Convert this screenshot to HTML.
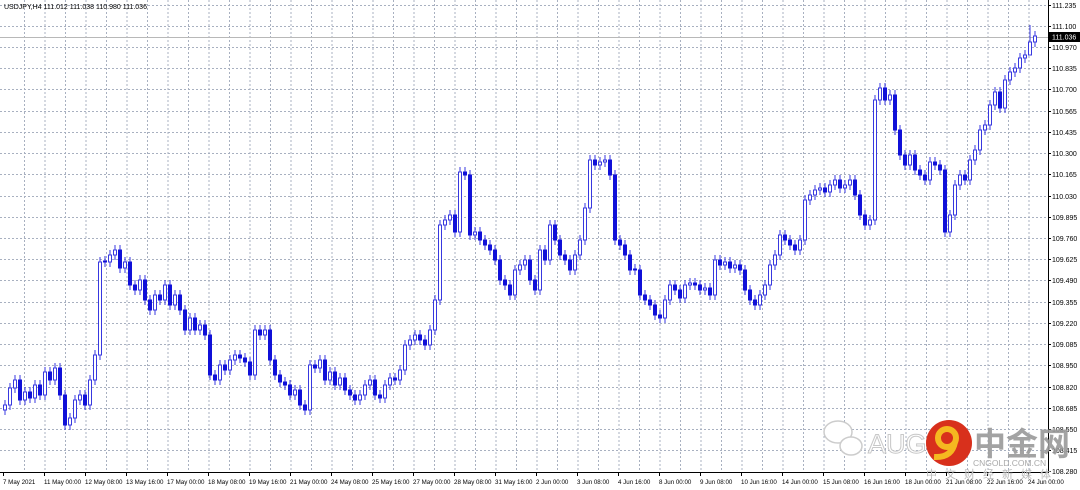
<!DOCTYPE html>
<html><head><meta charset="utf-8"><style>
html,body{margin:0;padding:0;background:#fff;width:1080px;height:490px;overflow:hidden}
svg{display:block;font-family:"Liberation Sans","Noto Sans CJK SC",sans-serif}
.u{fill:#fff;stroke:#3838e0;stroke-width:1}
.d{fill:#1010d8;stroke:#1010d8;stroke-width:1}
.t{font-size:7px;fill:#000}
.t2{font-size:6.2px;fill:#000}
</style></head><body>
<svg width="1080" height="490" xmlns="http://www.w3.org/2000/svg">
<g stroke="#a8b0c0" stroke-width="1" stroke-dasharray="2,2" fill="none">
<path d="M24.5 0V472M45 0V472M65.5 0V472M86 0V472M106.5 0V472M127 0V472M147.5 0V472M168 0V472M188.5 0V472M209 0V472M229.5 0V472M250 0V472M270.5 0V472M291 0V472M311.5 0V472M332 0V472M352.5 0V472M373 0V472M393.5 0V472M414 0V472M434.5 0V472M455 0V472M475.5 0V472M496 0V472M516.5 0V472M537 0V472M557.5 0V472M578 0V472M598.5 0V472M619 0V472M639.5 0V472M660 0V472M680.5 0V472M701 0V472M721.5 0V472M742 0V472M762.5 0V472M783 0V472M803.5 0V472M824 0V472M844.5 0V472M865 0V472M885.5 0V472M906 0V472M926.5 0V472M947 0V472M967.5 0V472M988 0V472M1008.5 0V472M1029 0V472"/>
<path d="M0 5.5H1048M0 26.5H1048M0 47.5H1048M0 68.5H1048M0 89.5H1048M0 111.5H1048M0 132.5H1048M0 153.5H1048M0 174.5H1048M0 196.5H1048M0 217.5H1048M0 238.5H1048M0 259.5H1048M0 280.5H1048M0 302.5H1048M0 323.5H1048M0 344.5H1048M0 365.5H1048M0 387.5H1048M0 408.5H1048M0 429.5H1048M0 450.5H1048"/>
</g>
<line x1="0" y1="37.5" x2="1048" y2="37.5" stroke="#b8b8b8"/>
<path stroke="#3838e0" stroke-width="1" fill="none" d="M5 400v15M10 383v27M15 375v18M20 375v30M25 387v18M30 387v16M35 380v23M40 380v20M45 367v33M50 367v18M55 363v22M60 363v37M65 390v40M70 413v17M75 395v28M80 390v15M85 390v20M90 375v35M95 350v35M100 257v103M105 256v11M110 250v17M115 245v15M120 245v28M125 257v16M130 257v33M135 280v15M140 275v20M145 275v30M150 295v20M155 290v25M160 290v15M165 280v25M170 280v30M175 290v20M180 290v25M185 305v30M190 313v22M195 313v22M200 320v15M205 320v20M210 330v50M215 370v15M220 360v25M225 360v15M230 355v20M235 350v15M240 350v13M245 353v14M250 357v23M255 325v55M260 325v15M265 325v15M270 325v40M275 355v25M280 370v17M285 377v13M290 380v20M295 385v15M300 385v25M305 400v15M310 360v55M315 360v13M320 355v18M325 355v30M330 367v18M335 367v23M340 373v17M345 373v22M350 385v15M355 390v15M360 390v15M365 380v20M370 375v15M375 375v25M380 390v13M385 380v23M390 373v17M395 373v12M400 365v20M405 340v35M410 335v15M415 330v15M420 330v15M425 335v15M430 325v25M435 295v40M440 220v85M445 215v15M450 210v15M455 210v27M460 167v70M465 167v13M470 170v70M475 227v13M480 227v18M485 235v15M490 240v15M495 245v20M500 255v30M505 275v15M510 280v20M515 265v35M520 260v15M525 255v15M530 255v30M535 275v20M540 245v50M545 245v20M550 220v45M555 220v25M560 235v25M565 250v15M570 255v20M575 250v25M580 235v25M585 203v42M590 155v58M595 155v15M600 157v13M605 155v12M610 155v25M615 170v75M620 235v15M625 240v20M630 250v25M635 264v11M640 265v35M645 290v15M650 295v15M655 300v20M660 310v13M665 295v28M670 280v25M675 280v15M680 285v18M685 280v23M690 278v12M695 278v12M700 280v15M705 283v12M710 283v17M715 255v45M720 255v15M725 257v13M730 257v16M735 260v13M740 260v15M745 265v30M750 285v20M755 295v15M760 290v20M765 280v20M770 260v30M775 250v20M780 230v30M785 230v15M790 235v15M795 240v15M800 235v20M805 195v50M810 190v15M815 185v15M820 183v12M825 183v14M830 180v17M835 175v15M840 175v18M845 180v13M850 175v15M855 175v25M860 190v30M865 210v20M870 215v15M875 95v130M880 83v22M885 83v22M890 90v15M895 90v45M900 125v35M905 150v20M910 150v20M915 150v25M920 165v15M925 170v15M930 157v28M935 157v13M940 160v15M945 165v72M950 210v27M955 180v40M960 170v20M965 170v15M970 155v30M975 145v20M980 125v30M985 120v15M990 100v30M995 87v23M1000 87v26M1005 75v38M1010 67v18M1015 63v14M1020 53v20M1025 50v13M1030 25v30M1035 31v16"/>
<g>
<rect class="u" x="3.5" y="405" width="3" height="5"/><rect class="u" x="8.5" y="388" width="3" height="17"/><rect class="u" x="13.5" y="380" width="3" height="8"/><rect class="d" x="18.5" y="380" width="3" height="20"/><rect class="u" x="23.5" y="392" width="3" height="8"/><rect class="d" x="28.5" y="392" width="3" height="6"/><rect class="u" x="33.5" y="385" width="3" height="13"/><rect class="d" x="38.5" y="385" width="3" height="10"/><rect class="u" x="43.5" y="372" width="3" height="23"/><rect class="d" x="48.5" y="372" width="3" height="8"/><rect class="u" x="53.5" y="368" width="3" height="12"/><rect class="d" x="58.5" y="368" width="3" height="27"/><rect class="d" x="63.5" y="395" width="3" height="30"/><rect class="u" x="68.5" y="418" width="3" height="7"/><rect class="u" x="73.5" y="400" width="3" height="18"/><rect class="u" x="78.5" y="395" width="3" height="5"/><rect class="d" x="83.5" y="395" width="3" height="10"/><rect class="u" x="88.5" y="380" width="3" height="25"/><rect class="u" x="93.5" y="355" width="3" height="25"/><rect class="u" x="98.5" y="262" width="3" height="93"/><rect class="d" x="103.5" y="261" width="3" height="1"/><rect class="u" x="108.5" y="255" width="3" height="7"/><rect class="u" x="113.5" y="250" width="3" height="5"/><rect class="d" x="118.5" y="250" width="3" height="18"/><rect class="u" x="123.5" y="262" width="3" height="6"/><rect class="d" x="128.5" y="262" width="3" height="23"/><rect class="d" x="133.5" y="285" width="3" height="5"/><rect class="u" x="138.5" y="280" width="3" height="10"/><rect class="d" x="143.5" y="280" width="3" height="20"/><rect class="d" x="148.5" y="300" width="3" height="10"/><rect class="u" x="153.5" y="295" width="3" height="15"/><rect class="d" x="158.5" y="295" width="3" height="5"/><rect class="u" x="163.5" y="285" width="3" height="15"/><rect class="d" x="168.5" y="285" width="3" height="20"/><rect class="u" x="173.5" y="295" width="3" height="10"/><rect class="d" x="178.5" y="295" width="3" height="15"/><rect class="d" x="183.5" y="310" width="3" height="20"/><rect class="u" x="188.5" y="318" width="3" height="12"/><rect class="d" x="193.5" y="318" width="3" height="12"/><rect class="u" x="198.5" y="325" width="3" height="5"/><rect class="d" x="203.5" y="325" width="3" height="10"/><rect class="d" x="208.5" y="335" width="3" height="40"/><rect class="d" x="213.5" y="375" width="3" height="5"/><rect class="u" x="218.5" y="365" width="3" height="15"/><rect class="d" x="223.5" y="365" width="3" height="5"/><rect class="u" x="228.5" y="360" width="3" height="10"/><rect class="u" x="233.5" y="355" width="3" height="5"/><rect class="d" x="238.5" y="355" width="3" height="3"/><rect class="d" x="243.5" y="358" width="3" height="4"/><rect class="d" x="248.5" y="362" width="3" height="13"/><rect class="u" x="253.5" y="330" width="3" height="45"/><rect class="d" x="258.5" y="330" width="3" height="5"/><rect class="u" x="263.5" y="330" width="3" height="5"/><rect class="d" x="268.5" y="330" width="3" height="30"/><rect class="d" x="273.5" y="360" width="3" height="15"/><rect class="d" x="278.5" y="375" width="3" height="7"/><rect class="d" x="283.5" y="382" width="3" height="3"/><rect class="d" x="288.5" y="385" width="3" height="10"/><rect class="u" x="293.5" y="390" width="3" height="5"/><rect class="d" x="298.5" y="390" width="3" height="15"/><rect class="d" x="303.5" y="405" width="3" height="5"/><rect class="u" x="308.5" y="365" width="3" height="45"/><rect class="d" x="313.5" y="365" width="3" height="3"/><rect class="u" x="318.5" y="360" width="3" height="8"/><rect class="d" x="323.5" y="360" width="3" height="20"/><rect class="u" x="328.5" y="372" width="3" height="8"/><rect class="d" x="333.5" y="372" width="3" height="13"/><rect class="u" x="338.5" y="378" width="3" height="7"/><rect class="d" x="343.5" y="378" width="3" height="12"/><rect class="d" x="348.5" y="390" width="3" height="5"/><rect class="d" x="353.5" y="395" width="3" height="5"/><rect class="u" x="358.5" y="395" width="3" height="5"/><rect class="u" x="363.5" y="385" width="3" height="10"/><rect class="u" x="368.5" y="380" width="3" height="5"/><rect class="d" x="373.5" y="380" width="3" height="15"/><rect class="d" x="378.5" y="395" width="3" height="3"/><rect class="u" x="383.5" y="385" width="3" height="13"/><rect class="u" x="388.5" y="378" width="3" height="7"/><rect class="d" x="393.5" y="378" width="3" height="2"/><rect class="u" x="398.5" y="370" width="3" height="10"/><rect class="u" x="403.5" y="345" width="3" height="25"/><rect class="u" x="408.5" y="340" width="3" height="5"/><rect class="u" x="413.5" y="335" width="3" height="5"/><rect class="d" x="418.5" y="335" width="3" height="5"/><rect class="d" x="423.5" y="340" width="3" height="5"/><rect class="u" x="428.5" y="330" width="3" height="15"/><rect class="u" x="433.5" y="300" width="3" height="30"/><rect class="u" x="438.5" y="225" width="3" height="75"/><rect class="u" x="443.5" y="220" width="3" height="5"/><rect class="u" x="448.5" y="215" width="3" height="5"/><rect class="d" x="453.5" y="215" width="3" height="17"/><rect class="u" x="458.5" y="172" width="3" height="60"/><rect class="d" x="463.5" y="172" width="3" height="3"/><rect class="d" x="468.5" y="175" width="3" height="60"/><rect class="u" x="473.5" y="232" width="3" height="3"/><rect class="d" x="478.5" y="232" width="3" height="8"/><rect class="d" x="483.5" y="240" width="3" height="5"/><rect class="d" x="488.5" y="245" width="3" height="5"/><rect class="d" x="493.5" y="250" width="3" height="10"/><rect class="d" x="498.5" y="260" width="3" height="20"/><rect class="d" x="503.5" y="280" width="3" height="5"/><rect class="d" x="508.5" y="285" width="3" height="10"/><rect class="u" x="513.5" y="270" width="3" height="25"/><rect class="u" x="518.5" y="265" width="3" height="5"/><rect class="u" x="523.5" y="260" width="3" height="5"/><rect class="d" x="528.5" y="260" width="3" height="20"/><rect class="d" x="533.5" y="280" width="3" height="10"/><rect class="u" x="538.5" y="250" width="3" height="40"/><rect class="d" x="543.5" y="250" width="3" height="10"/><rect class="u" x="548.5" y="225" width="3" height="35"/><rect class="d" x="553.5" y="225" width="3" height="15"/><rect class="d" x="558.5" y="240" width="3" height="15"/><rect class="d" x="563.5" y="255" width="3" height="5"/><rect class="d" x="568.5" y="260" width="3" height="10"/><rect class="u" x="573.5" y="255" width="3" height="15"/><rect class="u" x="578.5" y="240" width="3" height="15"/><rect class="u" x="583.5" y="208" width="3" height="32"/><rect class="u" x="588.5" y="160" width="3" height="48"/><rect class="d" x="593.5" y="160" width="3" height="5"/><rect class="u" x="598.5" y="162" width="3" height="3"/><rect class="u" x="603.5" y="160" width="3" height="2"/><rect class="d" x="608.5" y="160" width="3" height="15"/><rect class="d" x="613.5" y="175" width="3" height="65"/><rect class="d" x="618.5" y="240" width="3" height="5"/><rect class="d" x="623.5" y="245" width="3" height="10"/><rect class="d" x="628.5" y="255" width="3" height="15"/><rect class="d" x="633.5" y="269" width="3" height="1"/><rect class="d" x="638.5" y="270" width="3" height="25"/><rect class="d" x="643.5" y="295" width="3" height="5"/><rect class="d" x="648.5" y="300" width="3" height="5"/><rect class="d" x="653.5" y="305" width="3" height="10"/><rect class="d" x="658.5" y="315" width="3" height="3"/><rect class="u" x="663.5" y="300" width="3" height="18"/><rect class="u" x="668.5" y="285" width="3" height="15"/><rect class="d" x="673.5" y="285" width="3" height="5"/><rect class="d" x="678.5" y="290" width="3" height="8"/><rect class="u" x="683.5" y="285" width="3" height="13"/><rect class="u" x="688.5" y="283" width="3" height="2"/><rect class="d" x="693.5" y="283" width="3" height="2"/><rect class="d" x="698.5" y="285" width="3" height="5"/><rect class="u" x="703.5" y="288" width="3" height="2"/><rect class="d" x="708.5" y="288" width="3" height="7"/><rect class="u" x="713.5" y="260" width="3" height="35"/><rect class="d" x="718.5" y="260" width="3" height="5"/><rect class="u" x="723.5" y="262" width="3" height="3"/><rect class="d" x="728.5" y="262" width="3" height="6"/><rect class="u" x="733.5" y="265" width="3" height="3"/><rect class="d" x="738.5" y="265" width="3" height="5"/><rect class="d" x="743.5" y="270" width="3" height="20"/><rect class="d" x="748.5" y="290" width="3" height="10"/><rect class="d" x="753.5" y="300" width="3" height="5"/><rect class="u" x="758.5" y="295" width="3" height="10"/><rect class="u" x="763.5" y="285" width="3" height="10"/><rect class="u" x="768.5" y="265" width="3" height="20"/><rect class="u" x="773.5" y="255" width="3" height="10"/><rect class="u" x="778.5" y="235" width="3" height="20"/><rect class="d" x="783.5" y="235" width="3" height="5"/><rect class="d" x="788.5" y="240" width="3" height="5"/><rect class="d" x="793.5" y="245" width="3" height="5"/><rect class="u" x="798.5" y="240" width="3" height="10"/><rect class="u" x="803.5" y="200" width="3" height="40"/><rect class="u" x="808.5" y="195" width="3" height="5"/><rect class="u" x="813.5" y="190" width="3" height="5"/><rect class="u" x="818.5" y="188" width="3" height="2"/><rect class="d" x="823.5" y="188" width="3" height="4"/><rect class="u" x="828.5" y="185" width="3" height="7"/><rect class="u" x="833.5" y="180" width="3" height="5"/><rect class="d" x="838.5" y="180" width="3" height="8"/><rect class="u" x="843.5" y="185" width="3" height="3"/><rect class="u" x="848.5" y="180" width="3" height="5"/><rect class="d" x="853.5" y="180" width="3" height="15"/><rect class="d" x="858.5" y="195" width="3" height="20"/><rect class="d" x="863.5" y="215" width="3" height="10"/><rect class="u" x="868.5" y="220" width="3" height="5"/><rect class="u" x="873.5" y="100" width="3" height="120"/><rect class="u" x="878.5" y="88" width="3" height="12"/><rect class="d" x="883.5" y="88" width="3" height="12"/><rect class="u" x="888.5" y="95" width="3" height="5"/><rect class="d" x="893.5" y="95" width="3" height="35"/><rect class="d" x="898.5" y="130" width="3" height="25"/><rect class="d" x="903.5" y="155" width="3" height="10"/><rect class="u" x="908.5" y="155" width="3" height="10"/><rect class="d" x="913.5" y="155" width="3" height="15"/><rect class="d" x="918.5" y="170" width="3" height="5"/><rect class="d" x="923.5" y="175" width="3" height="5"/><rect class="u" x="928.5" y="162" width="3" height="18"/><rect class="d" x="933.5" y="162" width="3" height="3"/><rect class="d" x="938.5" y="165" width="3" height="5"/><rect class="d" x="943.5" y="170" width="3" height="62"/><rect class="u" x="948.5" y="215" width="3" height="17"/><rect class="u" x="953.5" y="185" width="3" height="30"/><rect class="u" x="958.5" y="175" width="3" height="10"/><rect class="d" x="963.5" y="175" width="3" height="5"/><rect class="u" x="968.5" y="160" width="3" height="20"/><rect class="u" x="973.5" y="150" width="3" height="10"/><rect class="u" x="978.5" y="130" width="3" height="20"/><rect class="u" x="983.5" y="125" width="3" height="5"/><rect class="u" x="988.5" y="105" width="3" height="20"/><rect class="u" x="993.5" y="92" width="3" height="13"/><rect class="d" x="998.5" y="92" width="3" height="16"/><rect class="u" x="1003.5" y="80" width="3" height="28"/><rect class="u" x="1008.5" y="72" width="3" height="8"/><rect class="u" x="1013.5" y="68" width="3" height="4"/><rect class="u" x="1018.5" y="58" width="3" height="10"/><rect class="u" x="1023.5" y="55" width="3" height="3"/><rect class="u" x="1028.5" y="42" width="3" height="13"/><rect class="u" x="1033.5" y="36" width="3" height="6"/>
</g>
<path d="M1048.5 0V472.5M0 472.5H1049" stroke="#000" fill="none"/>
<path stroke="#000" d="M1048 5.5h3M1048 26.5h3M1048 47.5h3M1048 68.5h3M1048 89.5h3M1048 111.5h3M1048 132.5h3M1048 153.5h3M1048 174.5h3M1048 196.5h3M1048 217.5h3M1048 238.5h3M1048 259.5h3M1048 280.5h3M1048 302.5h3M1048 323.5h3M1048 344.5h3M1048 365.5h3M1048 387.5h3M1048 408.5h3M1048 429.5h3M1048 450.5h3M1048 471.5h3"/>
<g class="t">
<text x="1052" y="8">111.235</text><text x="1052" y="29">111.100</text><text x="1052" y="50">110.970</text><text x="1052" y="71">110.835</text><text x="1052" y="92">110.700</text><text x="1052" y="114">110.565</text><text x="1052" y="135">110.435</text><text x="1052" y="156">110.300</text><text x="1052" y="177">110.165</text><text x="1052" y="199">110.030</text><text x="1052" y="220">109.895</text><text x="1052" y="241">109.760</text><text x="1052" y="262">109.625</text><text x="1052" y="283">109.490</text><text x="1052" y="305">109.355</text><text x="1052" y="326">109.220</text><text x="1052" y="347">109.085</text><text x="1052" y="368">108.950</text><text x="1052" y="390">108.820</text><text x="1052" y="411">108.685</text><text x="1052" y="432">108.550</text><text x="1052" y="453">108.415</text><text x="1052" y="474">108.280</text>
<text x="4" y="9">USDJPY,H4  111.012 111.038 110.980 111.036</text>
</g>
<rect x="1049" y="32" width="31" height="10" fill="#000"/><text x="1052" y="39.5" font-size="7" fill="#fff">111.036</text>
<path stroke="#000" d="M3.5 472v4M44.5 472v4M85.5 472v4M126.5 472v4M167.5 472v4M208.5 472v4M249.5 472v4M290.5 472v4M331.5 472v4M372.5 472v4M413.5 472v4M454.5 472v4M495.5 472v4M536.5 472v4M577.5 472v4M618.5 472v4M659.5 472v4M700.5 472v4M741.5 472v4M782.5 472v4M823.5 472v4M864.5 472v4M905.5 472v4M946.5 472v4M987.5 472v4M1028.5 472v4"/>
<g class="t2">
<text x="3" y="484">7 May 2021</text><text x="44" y="484">11 May 00:00</text><text x="85" y="484">12 May 08:00</text><text x="126" y="484">13 May 16:00</text><text x="167" y="484">17 May 00:00</text><text x="208" y="484">18 May 08:00</text><text x="249" y="484">19 May 16:00</text><text x="290" y="484">21 May 00:00</text><text x="331" y="484">24 May 08:00</text><text x="372" y="484">25 May 16:00</text><text x="413" y="484">27 May 00:00</text><text x="454" y="484">28 May 08:00</text><text x="495" y="484">31 May 16:00</text><text x="536" y="484">2 Jun 00:00</text><text x="577" y="484">3 Jun 08:00</text><text x="618" y="484">4 Jun 16:00</text><text x="659" y="484">8 Jun 00:00</text><text x="700" y="484">9 Jun 08:00</text><text x="741" y="484">10 Jun 16:00</text><text x="782" y="484">14 Jun 00:00</text><text x="823" y="484">15 Jun 08:00</text><text x="864" y="484">16 Jun 16:00</text><text x="905" y="484">18 Jun 00:00</text><text x="946" y="484">21 Jun 08:00</text><text x="987" y="484">22 Jun 16:00</text><text x="1028" y="484">24 Jun 00:00</text>
</g>
<ellipse cx="838" cy="432" rx="14" ry="11" fill="#fff" stroke="#ccc" stroke-width="1.5"/><ellipse cx="851" cy="446" rx="11" ry="9" fill="#fff" stroke="#ccc" stroke-width="1.5"/>
<text x="868" y="453" font-size="27" fill="#fff" stroke="#c8c8c8" stroke-width="1">AUG</text>
<circle cx="949" cy="443" r="23" fill="#d8301c"/><circle cx="947" cy="438" r="9" fill="none" stroke="#f5b820" stroke-width="6"/><path d="M955 442 Q952 458 934 457" stroke="#f5b820" stroke-width="6" fill="none"/>
<text x="974" y="455" font-size="32" font-weight="bold" fill="#9a9a9a" opacity="0.9">中金网</text>
<text x="973" y="466" font-size="8.5" fill="#aaa">CNGOLD.COM.CN</text>
<text x="926" y="478" font-size="11" fill="#bbb" letter-spacing="8">中文财经新媒体</text>
</svg>
</body></html>
